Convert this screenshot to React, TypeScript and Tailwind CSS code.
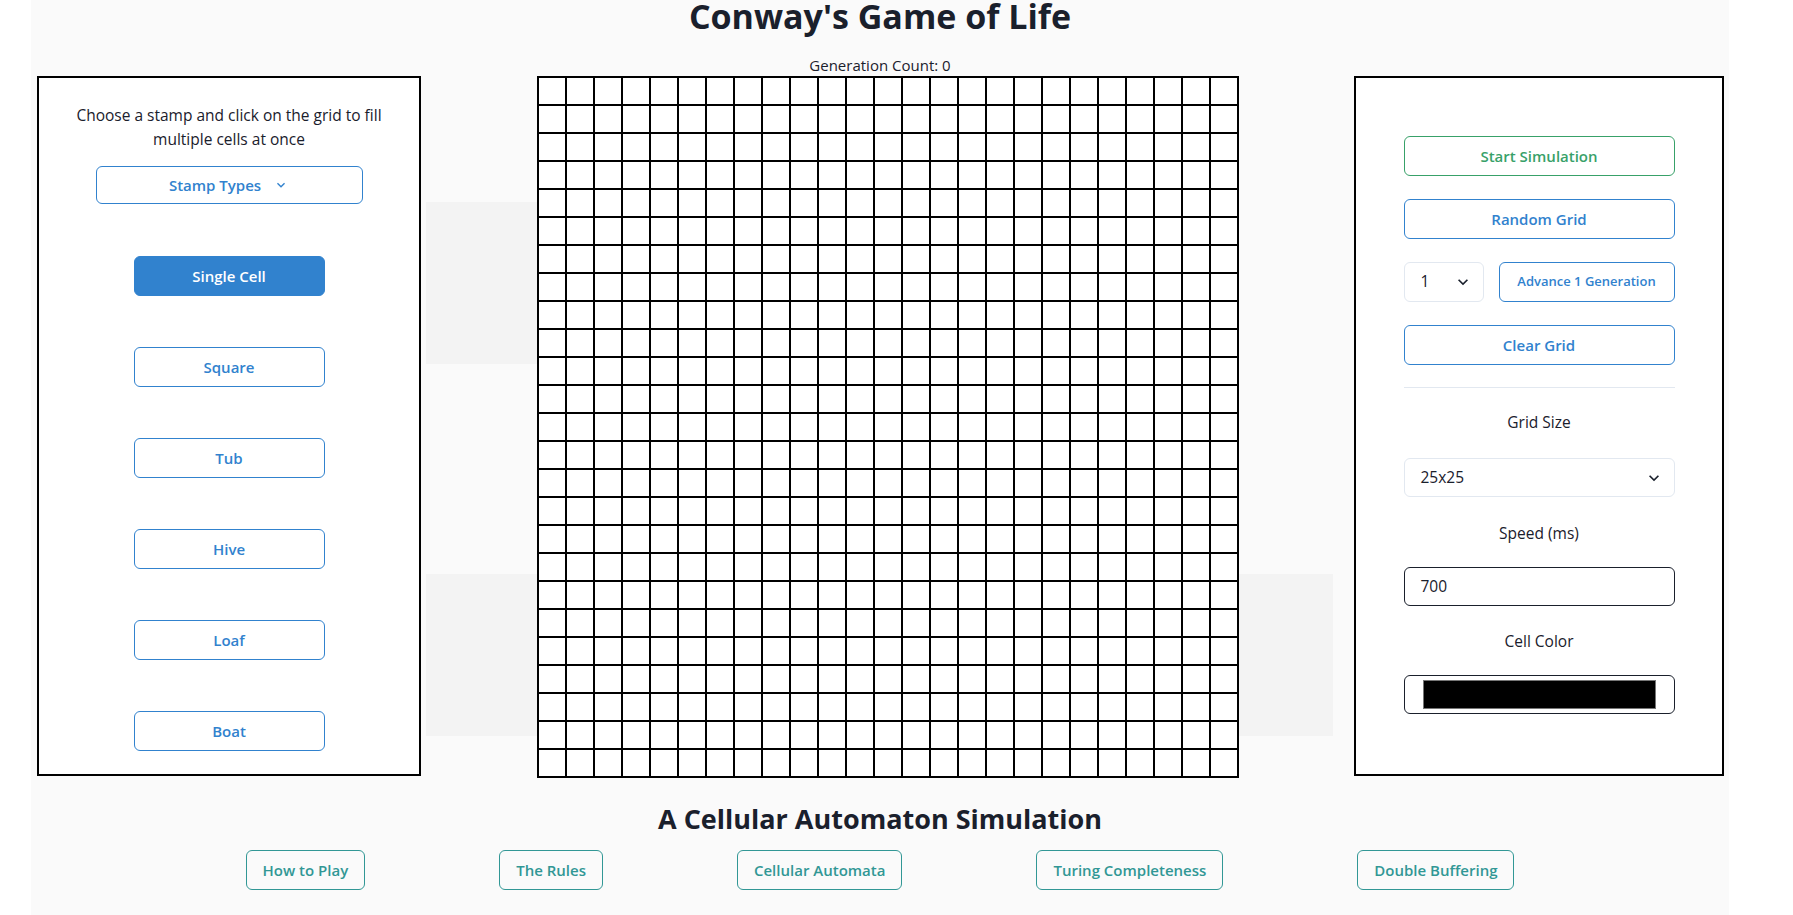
import React from "react";

const stamps = ["Single Cell", "Square", "Tub", "Hive", "Loaf", "Boat"];
const topics = [
  "How to Play",
  "The Rules",
  "Cellular Automata",
  "Turing Completeness",
  "Double Buffering",
];

const cells = Array.from({ length: 625 }, (_, i) => i);

function SelectIcon({ className }: { className?: string }) {
  return (
    <svg viewBox="0 0 24 24" className={className} fill="currentColor">
      <path d="M16.59 8.59L12 13.17 7.41 8.59 6 10l6 6 6-6z" />
    </svg>
  );
}

function StampPanel() {
  return (
    <div className="ml-[6px] flex h-[700px] w-[384px] shrink-0 flex-col items-center border-2 border-black bg-white pt-[25px]">
      <p className="w-[320px] text-center text-[15.5px] leading-[24px]">
        Choose a stamp and click on the grid to fill multiple cells at once
      </p>
      <button className="mt-[15px] flex h-[38px] w-[267px] items-center justify-center gap-3 rounded-md border border-[#3182ce] text-[15px] font-semibold text-[#3182ce]">
        Stamp Types
        <SelectIcon className="h-4 w-4" />
      </button>
      <div className="mt-[52px] flex flex-col gap-[51px]">
        {stamps.map((s, i) => (
          <button
            key={s}
            className={
              i === 0
                ? "h-[40px] w-[191px] rounded-md border border-[#3182ce] bg-[#3182ce] text-[15px] font-semibold text-white"
                : "h-[40px] w-[191px] rounded-md border border-[#3182ce] bg-white text-[15px] font-semibold text-[#3182ce]"
            }
          >
            {s}
          </button>
        ))}
      </div>
    </div>
  );
}

function ControlPanel() {
  return (
    <div className="flex h-[700px] w-[370px] shrink-0 flex-col items-center border-2 border-black bg-white pt-[58px]">
      <div className="flex w-[271px] flex-col gap-[23px]">
        <button className="h-[40px] rounded-md border border-[#38a169] text-[15px] font-semibold text-[#38a169]">
          Start Simulation
        </button>
        <button className="h-[40px] rounded-md border border-[#3182ce] text-[15px] font-semibold text-[#3182ce]">
          Random Grid
        </button>
        <div className="flex h-[40px] gap-[15px]">
          <div className="flex w-[80px] items-center justify-between rounded-md border border-[#e2e8f0] pl-4 pr-[10px] text-[15.5px]">
            1
            <SelectIcon className="h-5 w-5" />
          </div>
          <button className="flex-1 rounded-md border border-[#3182ce] text-[13px] font-semibold text-[#3182ce]">
            Advance 1 Generation
          </button>
        </div>
        <button className="h-[40px] rounded-md border border-[#3182ce] text-[15px] font-semibold text-[#3182ce]">
          Clear Grid
        </button>
      </div>
      <div className="mt-[22px] h-px w-[271px] bg-[#e2e8f0]" />
      <p className="mt-[22px] text-[15.5px] leading-[24px]">Grid Size</p>
      <div className="mt-[24px] flex h-[39px] w-[271px] items-center justify-between rounded-md border border-[#e2e8f0] pl-4 pr-[10px] text-[15.5px]">
        25x25
        <SelectIcon className="h-5 w-5" />
      </div>
      <p className="mt-[24px] text-[15.5px] leading-[24px]">Speed (ms)</p>
      <div className="mt-[22px] flex h-[39px] w-[271px] items-center rounded-md border border-[#1a202c] pl-4 text-[15.5px]">
        700
      </div>
      <p className="mt-[23px] text-[15.5px] leading-[24px]">Cell Color</p>
      <div className="mt-[22px] flex h-[39px] w-[271px] items-center rounded-md border border-[#1a202c] px-[18px]">
        <div className="h-[29px] flex-1 border border-[#767676] bg-black" />
      </div>
    </div>
  );
}

export default function App() {
  return (
    <div className="min-h-screen bg-white font-['Open_Sans',sans-serif] text-[#1a202c]">
      <div className="ml-[31px] flex min-h-[915px] w-[1698px] flex-col items-center bg-[#fafafa]">
        <h1 className="h-[32px] text-[34px] font-bold leading-[32px]">
          Conway's Game of Life
        </h1>
        <p className="mt-[23px] text-[15px] leading-[20px]">Generation Count: 0</p>
        <div className="mt-[1px] flex w-full items-start">
          <StampPanel />
          <div className="flex w-[116px] shrink-0 flex-col pl-[5px]">
            <div className="mt-[126px] h-[162px] bg-[#f3f3f3]" />
            <div className="mt-[210px] h-[162px] bg-[#f3f3f3]" />
          </div>
          <div className="grid shrink-0 grid-cols-[repeat(25,26px)] gap-[2px] bg-black p-[2px]">
            {cells.map((c) => (
              <div key={c} className="h-[26px] w-[26px] bg-white" />
            ))}
          </div>
          <div className="flex w-[115px] shrink-0 flex-col pr-[21px]">
            <div className="mt-[498px] h-[162px] bg-[#f3f3f3]" />
          </div>
          <ControlPanel />
        </div>
        <h2 className="mt-[23px] text-[27px] font-bold leading-[36px]">
          A Cellular Automaton Simulation
        </h2>
        <div className="mt-[13px] flex gap-[134px]">
          {topics.map((t) => (
            <button
              key={t}
              className="h-[40px] rounded-md border border-[#319795] px-4 text-[15px] font-semibold text-[#319795]"
            >
              {t}
            </button>
          ))}
        </div>
      </div>
    </div>
  );
}
